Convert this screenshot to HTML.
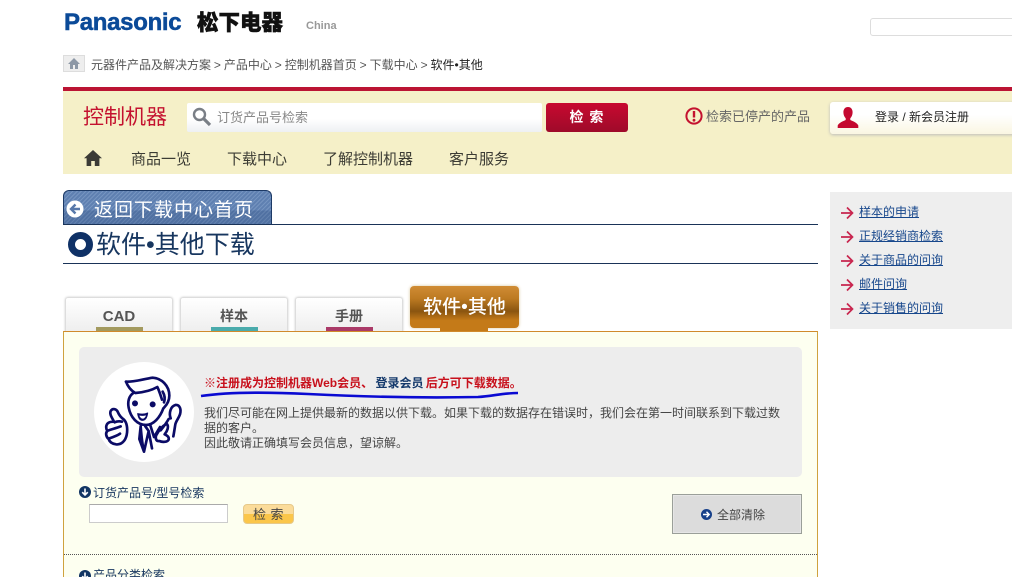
<!DOCTYPE html>
<html lang="zh"><head><meta charset="utf-8"><title>软件•其他下载</title>
<style>
*{box-sizing:border-box}
html,body{margin:0;padding:0;background:#fff;width:1012px;height:577px;overflow:hidden}
#w{width:1012px;height:577px;position:relative;overflow:hidden;font-family:"Liberation Sans","Noto Sans CJK SC",sans-serif;font-size:12px;color:#333}
.a{position:absolute;white-space:nowrap}
.t{line-height:18px}
.side{font-size:12px;color:#17478c;text-decoration:underline;left:859px}
.tab{position:absolute;top:297px;width:108px;height:36px;background:linear-gradient(#fff,#eee);border:1px solid #ddd;border-radius:3px 3px 0 0;box-shadow:0 0 2px #ccc;text-align:center;font-size:15px;font-weight:bold;color:#555;line-height:37px}
.bar{position:absolute;top:327px;width:47px;height:5px}
</style></head><body><div id="w">

<div class="a" style="left:64px;top:9px;font-size:24px;line-height:27px;font-weight:bold;color:#0b4a98;letter-spacing:-.3px;-webkit-text-stroke:.5px #0b4a98">Panasonic</div>
<div class="a" style="left:197px;top:9px;font-size:21.5px;line-height:28px;font-weight:900;color:#111;-webkit-text-stroke:.5px #111">松下电器</div>
<div class="a" style="left:306px;top:19px;font-size:11px;line-height:14px;font-weight:bold;color:#999">China</div>
<div class="a" style="left:870px;top:18px;width:150px;height:18px;border:1px solid #ddd;border-radius:3px;background:#fff"></div>

<div class="a" style="left:63px;top:55px;width:22px;height:17px;background:#eee;border:1px solid #ddd"></div>
<svg class="a" style="left:68px;top:58px" width="12" height="11" viewBox="0 0 12 11"><path d="M6 0L0 6h2v5h3V7h2v4h3V6h2z" fill="#8d98a6"/></svg>
<div class="a t" style="left:91px;top:56px;color:#555;word-spacing:-.4px">元器件产品及解决方案 &gt; 产品中心 &gt; 控制机器首页 &gt; 下载中心 &gt; <span style="color:#222">软件•其他</span></div>

<div class="a" style="left:63px;top:87px;width:949px;height:4px;background:#bb1433"></div>
<div class="a" style="left:63px;top:91px;width:949px;height:83px;background:#f5f0c8"></div>
<div class="a" style="left:83px;top:103px;font-size:21px;line-height:30px;color:#c4122f">控制机器</div>
<div class="a" style="left:187px;top:103px;width:355px;height:29px;background:linear-gradient(#fff 55%,#eef0f3);border-radius:2px"></div>
<svg class="a" style="left:192px;top:107px" width="20" height="20" viewBox="0 0 20 20"><circle cx="7.500" cy="7.500" r="5.500" fill="none" stroke="#7a7f86" stroke-width="2.400"/><path d="M11.500 11.500L18 18" stroke="#7a7f86" stroke-width="3.200"/></svg>
<div class="a" style="left:217px;top:108px;font-size:13px;line-height:19px;color:#888">订货产品号检索</div>
<div class="a" style="left:546px;top:103px;width:82px;height:29px;background:linear-gradient(#c8092f,#9e0a2a);border-radius:3px;color:#fff;font-weight:bold;font-size:14px;line-height:28px;text-align:center;letter-spacing:1px">检 索</div>
<svg class="a" style="left:685px;top:107px" width="18" height="18" viewBox="0 0 18 18"><circle cx="9" cy="9" r="7.600" fill="none" stroke="#c4122f" stroke-width="2"/><path d="M9 4v6.500" stroke="#c4122f" stroke-width="2.400"/><circle cx="9" cy="13.200" r="1.400" fill="#c4122f"/></svg>
<div class="a" style="left:706px;top:107px;font-size:13px;line-height:19px;color:#666">检索已停产的产品</div>
<div class="a" style="left:830px;top:102px;width:190px;height:32px;background:linear-gradient(#fff 40%,#faf6e2);border-radius:3px;box-shadow:0 1px 3px #bbb"></div>
<svg class="a" style="left:837px;top:106px" width="22" height="23" viewBox="0 0 22 23"><path d="M11 1c3 0 4.600 2.400 4.600 5.200 0 2.600-1 4.800-2.300 6v1.800c2.700 1.300 6.700 2.600 8 5.500v2.500H.7v-2.500c1.300-2.900 5.300-4.200 8-5.500v-1.800c-1.300-1.200-2.300-3.400-2.300-6C6.400 3.400 8 1 11 1z" fill="#c4082f"/></svg>
<div class="a" style="left:875px;top:108px;font-size:12px;line-height:18px;color:#222">登录 / 新会员注册</div>

<svg class="a" style="left:84px;top:150px" width="18" height="16" viewBox="0 0 18 16"><path d="M9 0L0 8.200h2.600V16h4.600v-5h3.600v5h4.600V8.200H18z" fill="#3b3b36"/></svg>
<div class="a" style="left:131px;top:150px;font-size:15px;line-height:20px;color:#3c3c34">商品一览</div>
<div class="a" style="left:227px;top:150px;font-size:15px;line-height:20px;color:#3c3c34">下载中心</div>
<div class="a" style="left:323px;top:150px;font-size:15px;line-height:20px;color:#3c3c34">了解控制机器</div>
<div class="a" style="left:449px;top:150px;font-size:15px;line-height:20px;color:#3c3c34">客户服务</div>

<div class="a" style="left:63px;top:190px;width:209px;height:35px;border:1px solid #1d3a66;border-bottom:0;border-radius:6px 6px 0 0;background:linear-gradient(transparent 58%,rgba(30,60,110,.22) 58%),repeating-linear-gradient(135deg,#7594c0 0 1px,#5f80b1 1px 3px)"></div>
<svg class="a" style="left:66px;top:200px" width="18" height="18" viewBox="0 0 18 18"><circle cx="9" cy="9" r="8.500" fill="#fff"/><path d="M9.500 4.500L5 9l4.500 4.500M5.500 9H14" fill="none" stroke="#5778aa" stroke-width="2.400"/></svg>
<div class="a" style="left:94px;top:198px;font-size:19px;line-height:26px;letter-spacing:1px;color:#fff">返回下载中心首页</div>
<div class="a" style="left:63px;top:224px;width:755px;height:1px;background:#1a3358"></div>
<div class="a" style="left:68px;top:232px;width:25px;height:25px;border:7.500px solid #0f3166;border-radius:50%;background:#fff"></div>
<div class="a" style="left:96px;top:228px;font-size:25px;line-height:34px;color:#17365f">软件•其他下载</div>
<div class="a" style="left:63px;top:263px;width:755px;height:1px;background:#1a3358"></div>

<div class="tab" style="left:65px">CAD</div>
<div class="tab" style="left:180px;font-size:14px">样本</div>
<div class="tab" style="left:295px;font-size:14px">手册</div>
<div class="bar" style="left:96px;background:#a39a5f"></div>
<div class="bar" style="left:211px;background:#4aabac"></div>
<div class="bar" style="left:326px;background:#aa3a68"></div>
<div class="a" style="left:410px;top:286px;width:109px;height:42px;border-radius:4px;background:linear-gradient(#d08c35,#bd7a22 30%,#8a5510 60%,#c47a18 82%);box-shadow:0 0 3px #d9c7a0;color:#fff;font-size:19px;font-weight:500;line-height:43px;text-align:center">软件•其他</div>
<div class="a" style="left:440px;top:327px;width:48px;height:5px;background:#c47a18"></div>

<div class="a" style="left:63px;top:331px;width:755px;height:260px;border:1px solid #cfa23e;border-top-color:#d08a2c;background:#fdfff0"></div>
<div class="a" style="left:79px;top:347px;width:723px;height:130px;background:#ededed;border-radius:5px"></div>
<div class="a" style="left:94px;top:362px;width:100px;height:100px;border-radius:50%;background:#fff"></div>
<svg class="a" style="left:100px;top:365px" width="90" height="95" viewBox="0 0 270 285" fill="none" stroke="#0b0b66" stroke-width="8" stroke-linejoin="round" stroke-linecap="round">
<path d="M78 50C100 52 130 42 158 38C185 40 208 62 208 92C208 110 200 120 192 128"/>
<path d="M78 50C84 66 96 78 106 84C130 82 155 76 172 66C178 78 182 92 186 104"/>
<path d="M100 84C88 92 82 108 86 128C92 158 112 180 138 180C160 180 180 158 190 130"/>
<path d="M188 80C194 90 196 100 192 112"/>
<path d="M42 170C36 158 28 148 32 138C38 128 50 132 54 142C58 152 64 158 72 164C80 172 84 190 80 210C76 228 64 240 48 238C36 236 28 230 26 222C18 216 16 204 22 198C16 188 18 176 28 172C32 170 38 170 42 170Z"/>
<path d="M26 196C38 192 52 188 62 184M28 220C40 216 52 212 60 206M44 172C52 168 58 168 66 170"/>
<path d="M122 184L118 222L132 260L146 198L136 184M146 198L156 250M122 184C124 210 126 235 132 260M150 178L162 216L180 186"/>
<path d="M182 196C190 186 198 176 206 162M168 212C176 196 186 184 200 176C208 184 202 198 194 208C202 212 208 216 206 224C202 232 186 232 178 228C168 230 166 220 168 212Z"/>
<path d="M212 160C206 144 212 124 226 120C240 118 244 134 240 148C236 160 228 168 226 178C224 190 222 204 220 214"/>
<circle cx="105" cy="115" r="5" fill="#0b0b66"/><circle cx="158" cy="118" r="5" fill="#0b0b66"/>
<path d="M113 146C123 148 135 148 143 144C141 158 135 166 127 166S115 158 113 146Z" fill="#0b0b66" stroke-width="3"/>
<path d="M118 152C124 153 132 153 138 151C136 157 132 161 128 161S120 157 118 152Z" fill="#fff" stroke="none"/>
</svg>
<div class="a t" style="left:204px;top:374px;font-size:12px;font-weight:bold;color:#c8101c;word-spacing:-1px">※注册成为控制机器Web会员、 <span style="color:#14396b">登录会员</span> 后方可下载数据。</div>
<svg class="a" style="left:198px;top:390px" width="326" height="10" viewBox="0 0 326 10"><path d="M3 6C30 2 70 2 110 4c60 3 120 4 170 3 15-1 25-4 40-4" fill="none" stroke="#0a0ad2" stroke-width="2.600"/></svg>
<div class="a" style="left:204px;top:406px;width:582px;white-space:normal;font-size:12px;line-height:15px;color:#444">我们尽可能在网上提供最新的数据以供下载。如果下载的数据存在错误时，我们会在第一时间联系到下载过数据的客户。<br>因此敬请正确填写会员信息，望谅解。</div>

<svg class="a" style="left:79px;top:486px" width="12" height="12" viewBox="0 0 12 12"><circle cx="6" cy="6" r="6" fill="#123563"/><path d="M6 2.500V9M3.200 6.200L6 9l2.800-2.800" fill="none" stroke="#fff" stroke-width="1.600"/></svg>
<div class="a t" style="left:93px;top:484px;color:#17365f">订货产品号/型号检索</div>
<div class="a" style="left:89px;top:504px;width:139px;height:19px;background:#fff;border:1px solid #ccc;border-top-color:#aaa"></div>
<div class="a" style="left:243px;top:504px;width:51px;height:20px;border-radius:4px;background:linear-gradient(#fbdc9a 50%,#fbc64a 50%);border:1px solid #e6c98a;line-height:19px;font-size:13px;text-align:center;color:#444;letter-spacing:.5px">检 索</div>
<div class="a" style="left:672px;top:494px;width:130px;height:40px;background:#dcdcdc;border:1px solid #9a9f99;box-shadow:inset 0 0 0 1px #e6e6e6"></div>
<svg class="a" style="left:701px;top:509px" width="11" height="11" viewBox="0 0 11 11"><circle cx="5.500" cy="5.500" r="5.500" fill="#17408a"/><path d="M2 5.500h6M5.500 2.800l2.700 2.700-2.700 2.700" fill="none" stroke="#fff" stroke-width="1.400"/></svg>
<div class="a t" style="left:717px;top:506px;color:#444">全部清除</div>
<div class="a" style="left:64px;top:554px;width:753px;border-top:1px dotted #555"></div>
<svg class="a" style="left:79px;top:570px" width="12" height="12" viewBox="0 0 12 12"><circle cx="6" cy="6" r="6" fill="#123563"/><path d="M6 2.500V9M3.200 6.200L6 9l2.800-2.800" fill="none" stroke="#fff" stroke-width="1.600"/></svg>
<div class="a t" style="left:93px;top:566px;color:#17365f">产品分类检索</div>

<div class="a" style="left:830px;top:192px;width:182px;height:137px;background:#eeeeee"></div>
<svg class="a" style="left:840px;top:205px" width="15" height="112" viewBox="0 0 15 112" fill="none" stroke="#c8264f" stroke-width="1.700"><path d="M1 8h11M7 2.500L12.500 8 7 13.500M1 32h11M7 26.500L12.500 32 7 37.500M1 56h11M7 50.500L12.500 56 7 61.500M1 80h11M7 74.500L12.500 80 7 85.500M1 104h11M7 98.500L12.500 104 7 109.500"/></svg>
<div class="a t side" style="top:203px">样本的申请</div>
<div class="a t side" style="top:227px">正规经销商检索</div>
<div class="a t side" style="top:251px">关于商品的问询</div>
<div class="a t side" style="top:275px">邮件问询</div>
<div class="a t side" style="top:299px">关于销售的问询</div>
</div></body></html>
